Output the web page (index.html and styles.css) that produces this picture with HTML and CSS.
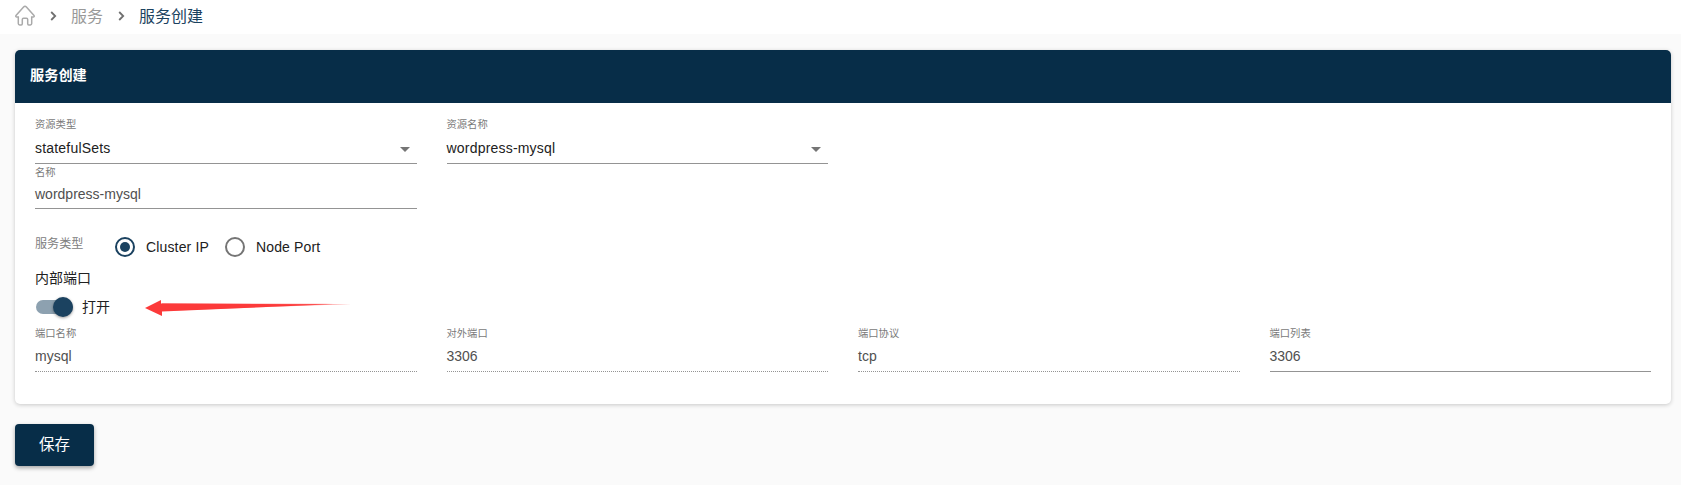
FILE: index.html
```html
<!DOCTYPE html>
<html lang="zh-CN">
<head>
<meta charset="utf-8">
<title>服务创建</title>
<link rel="stylesheet" href="styles.css">
</head>
<body>
<nav class="breadcrumb">
  <svg class="home" width="20" height="21" viewBox="0 0 20 21"><path d="M1.6 11.9Q.1 11.7 1.2 10.2L8.6 2Q10 .4 11.4 2L18.8 10.2Q19.9 11.7 18.4 11.9H16.7V18.6Q16.7 20 15.3 20H13.8Q12.7 20 12.7 18.8V14.6Q12.7 13.3 11.5 13.3H8.5Q7.3 13.3 7.3 14.6V18.8Q7.3 20 6.2 20H4.700Q3.3 20 3.3 18.6V11.9Z"/></svg>
  <svg class="chevron" width="7" height="10" viewBox="0 0 7 10"><path d="M1.2 1 5.2 5 1.2 9"/></svg>
  <a class="crumb">服务</a>
  <svg class="chevron" width="7" height="10" viewBox="0 0 7 10"><path d="M1.2 1 5.2 5 1.2 9"/></svg>
  <span class="crumb current">服务创建</span>
</nav>
<main class="page">
  <section class="card">
    <h1 class="card-title">服务创建</h1>
    <div class="card-body">
      <div class="row selects">
        <div class="field">
          <span class="label">资源类型</span>
          <div class="value select">statefulSets<i class="caret"></i></div>
        </div>
        <div class="field">
          <span class="label">资源名称</span>
          <div class="value select">wordpress-mysql<i class="caret"></i></div>
        </div>
      </div>
      <div class="row names">
        <div class="field">
          <span class="label">名称</span>
          <div class="value">wordpress-mysql</div>
        </div>
      </div>
      <div class="service-type">
        <span class="type-label">服务类型</span>
        <span class="radio checked"></span><span class="radio-text">Cluster IP</span>
        <span class="radio"></span><span class="radio-text">Node Port</span>
      </div>
      <h2 class="subtitle">内部端口</h2>
      <div class="toggle-row">
        <span class="switch"><span class="knob"></span></span>
        <span class="toggle-text">打开</span>
        <svg class="arrow" width="206" height="20" viewBox="0 0 206 20"><path class="arrow-tail" d="M17 6 180 6.800 206 7.500 180 8 17 14Z"/><path d="M0 11 16 3V6.500L188 7.200 17 14.500V19Z"/></svg>
      </div>
      <div class="row ports">
        <div class="field disabled">
          <span class="label">端口名称</span>
          <div class="value">mysql</div>
        </div>
        <div class="field disabled">
          <span class="label">对外端口</span>
          <div class="value">3306</div>
        </div>
        <div class="field disabled">
          <span class="label">端口协议</span>
          <div class="value">tcp</div>
        </div>
        <div class="field">
          <span class="label">端口列表</span>
          <div class="value">3306</div>
        </div>
      </div>
    </div>
  </section>
  <button class="save">保存</button>
</main>
</body>
</html>
```
FILE: styles.css
```css
* { box-sizing: border-box; }
body {
  margin: 0;
  height: 485px;
  overflow: hidden;
  background: #fafafa;
  color: #212121;
  font: 14px/20px "Liberation Sans", "Noto Sans CJK SC", sans-serif;
}
.breadcrumb {
  display: flex;
  align-items: center;
  height: 34px;
  padding: 0 15px 2px;
  background: #fff;
}
.home { fill: none; stroke: #aaa; stroke-width: 1.5; margin: 0 15px 2px 0; }
.chevron { fill: none; stroke: #707070; stroke-width: 1.8; }
.crumb { margin: 0 15px 0 14px; padding-top: 2px; color: #999; font-size: 16px; }
.crumb.current { color: #1b4260; }
.page { padding: 16px 10px 0 15px; }
.card {
  height: 354px;
  border-radius: 5px;
  background: #fff;
  box-shadow: 0 1px 4px rgba(0, 0, 0, .2);
  overflow: hidden;
}
.card-title {
  height: 53px;
  margin: 0;
  padding-left: 15px;
  background: #072d48;
  color: #fff;
  font-size: 14.2px;
  line-height: 51px;
}
.card-body { padding: 15px 20px 0; }
.row { display: grid; grid-template-columns: repeat(4, 1fr); column-gap: 30px; }
.label { display: block; height: 14px; color: #7a7a7a; font-size: 10.3px; line-height: 13px; }
.value {
  display: flex;
  align-items: center;
  justify-content: space-between;
  border-bottom: 1px solid #949494;
  color: #505050;
}
.disabled .value { border-bottom-style: dotted; }
.selects .value { height: 32px; color: #212121; letter-spacing: .2px; }
.names .label { line-height: 18px; }
.names .value { height: 31px; padding-top: 1px; }
.ports .label { line-height: 16px; }
.ports .value { height: 32px; padding-top: 1px; }
.caret { margin: 3px 7px 0 0; border: 5px solid transparent; border-top-color: #757575; border-bottom: 0; }
.service-type { display: flex; align-items: center; height: 24px; margin-top: 26px; }
.type-label { width: 80px; margin-top: -7px; color: #808080; font-size: 12.1px; }
.radio {
  display: grid;
  place-items: center;
  width: 20px;
  height: 20px;
  border: 2px solid #757575;
  border-radius: 50%;
}
.radio.checked { border-color: #1b4260; }
.checked::before { content: ""; width: 10px; height: 10px; border-radius: 50%; background: #1b4260; }
.radio-text { margin: 0 16px 0 11px; letter-spacing: .15px; }
.subtitle { margin: 9px 0 0; font-size: 14px; font-weight: 400; line-height: 20px; }
.toggle-row { display: flex; align-items: center; height: 22px; margin-top: 8px; }
.switch {
  display: flex;
  align-items: center;
  justify-content: flex-end;
  width: 37px;
  height: 14px;
  margin-left: 1px;
  border-radius: 7px;
  background: #8da1b0;
}
.knob { width: 20px; height: 20px; border-radius: 50%; background: #1b4260; box-shadow: 0 1px 3px rgba(0, 0, 0, .4); }
.toggle-text { margin-left: 9px; }
.arrow { margin-left: 35px; fill: #fc3a3a; }
.arrow-tail { opacity: .4; }
.ports { margin-top: 8px; }
.save {
  display: block;
  width: 79px;
  height: 42px;
  margin-top: 20px;
  padding: 0;
  border: 0;
  border-radius: 4px;
  background: #072d48;
  color: #fff;
  font: 15.5px/42px "Liberation Sans", "Noto Sans CJK SC", sans-serif;
  box-shadow: 0 2px 4px rgba(0, 0, 0, .35);
}
```
